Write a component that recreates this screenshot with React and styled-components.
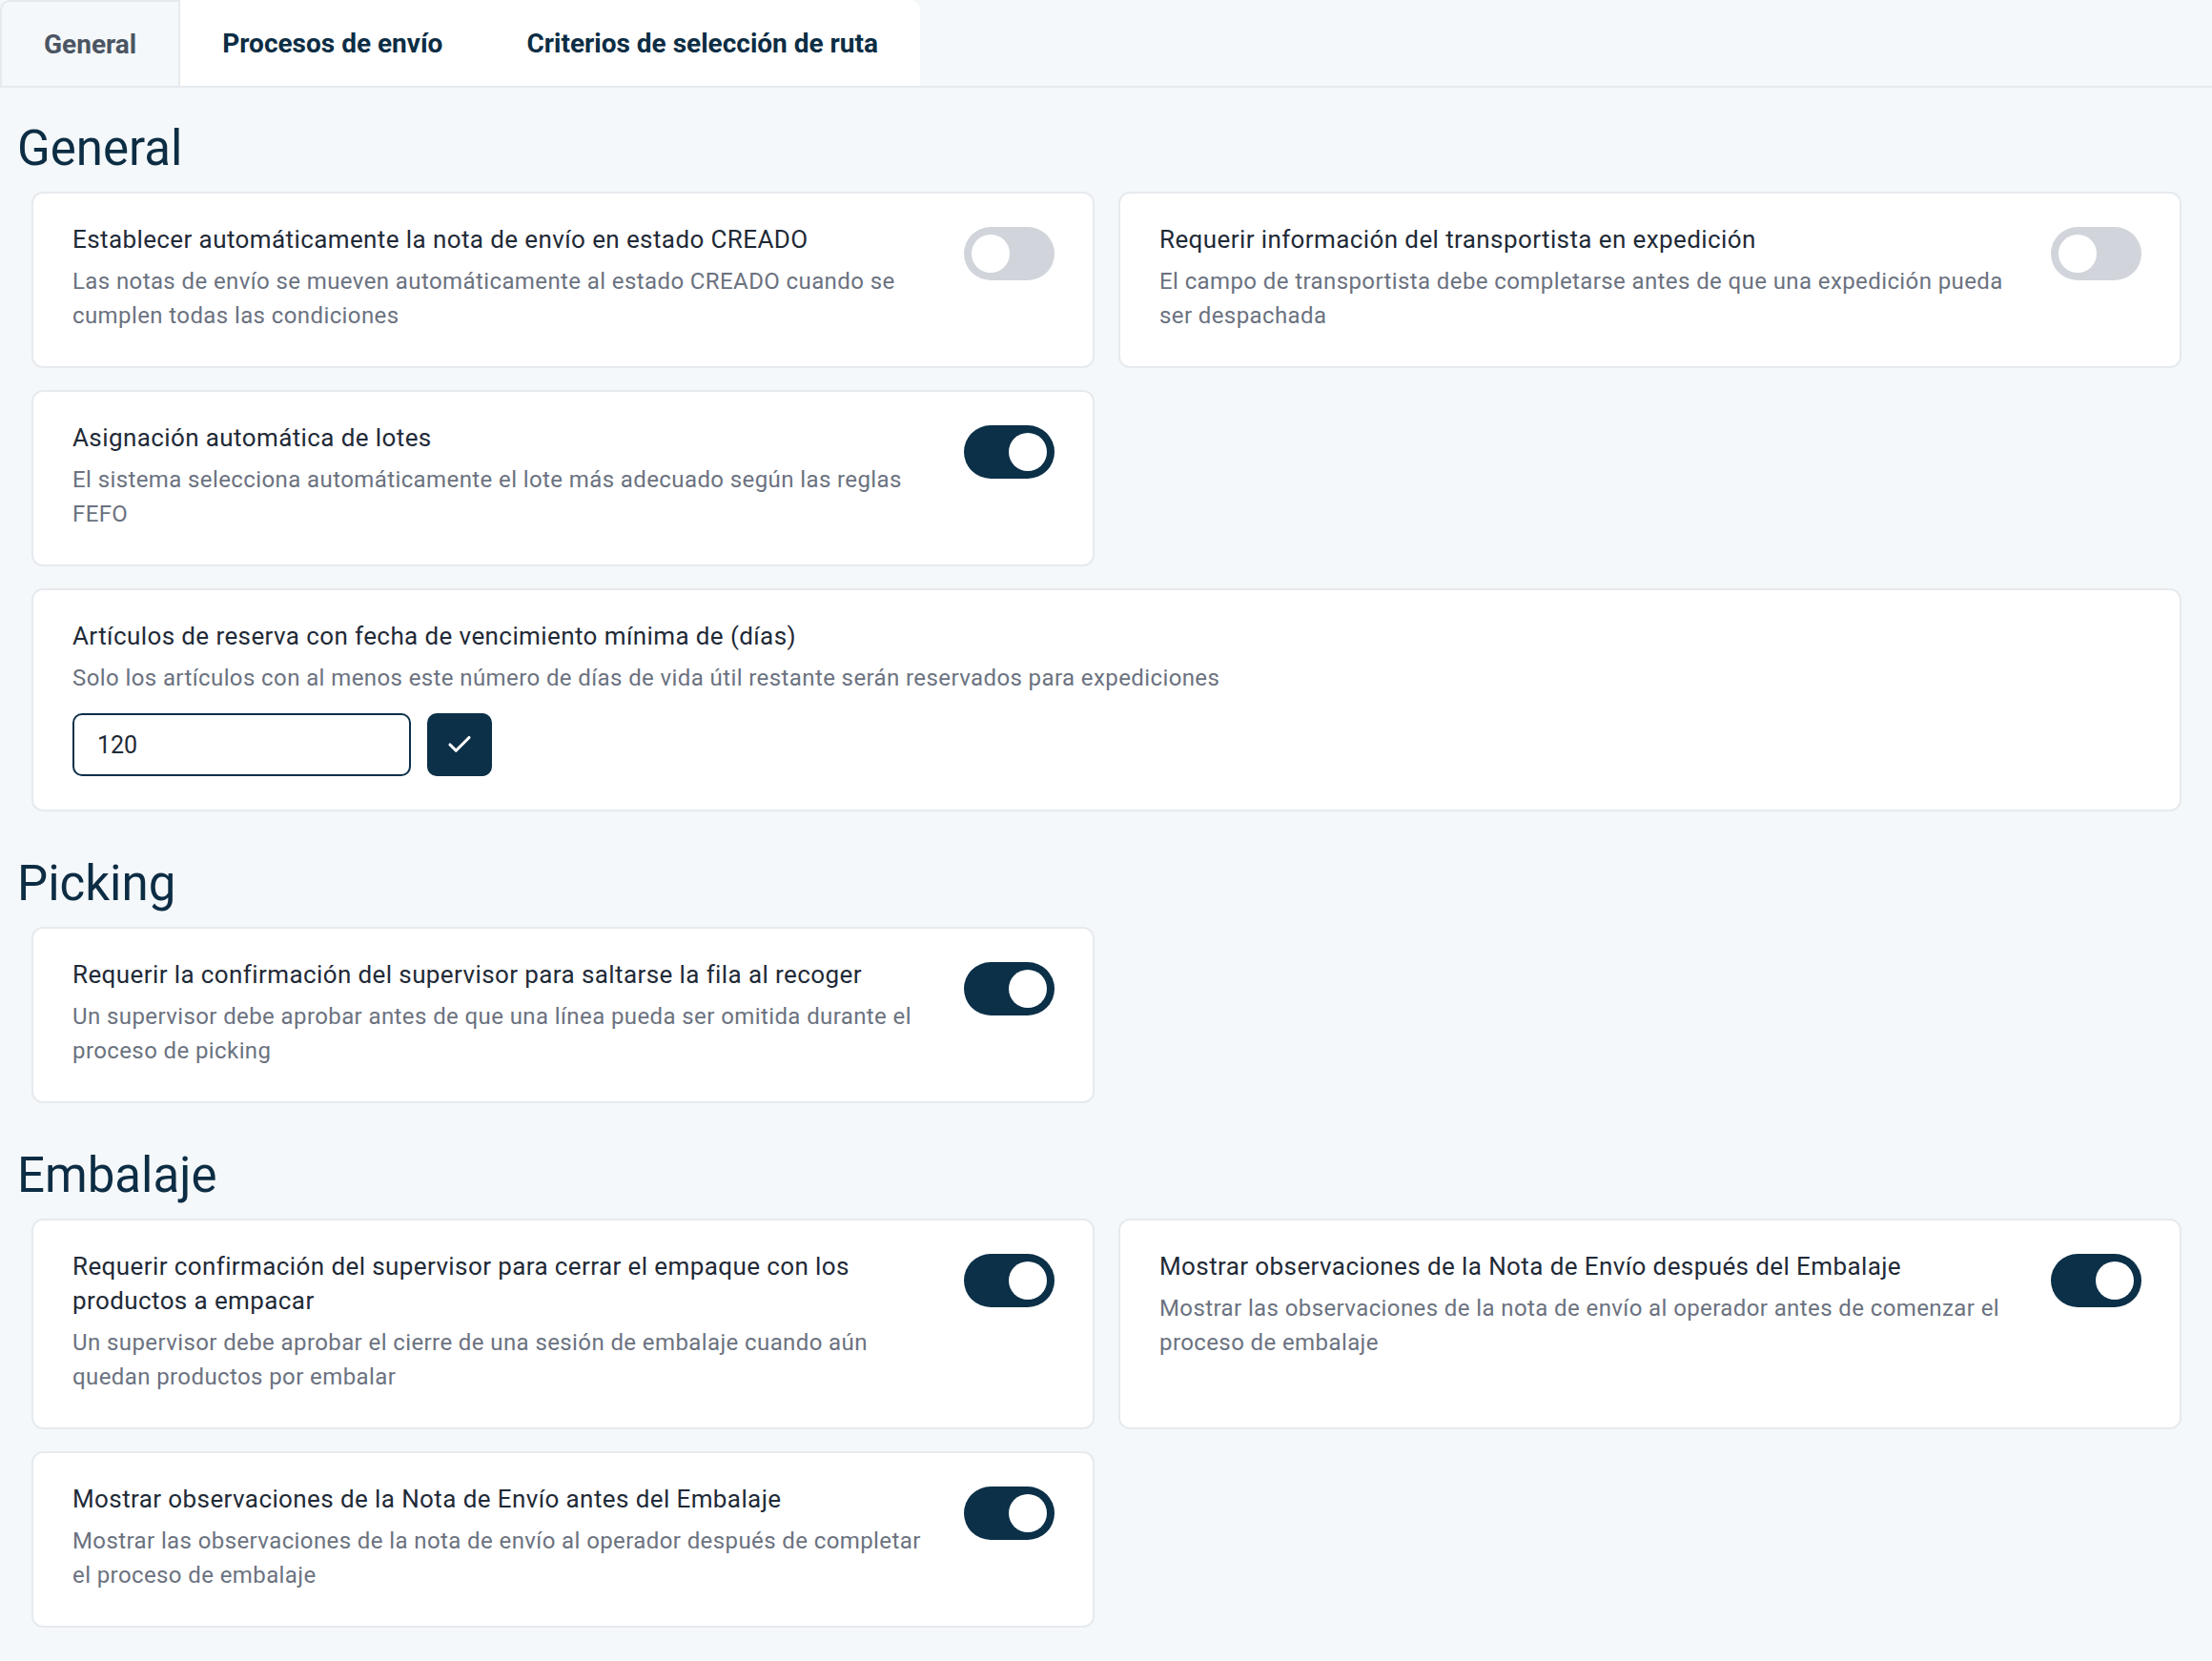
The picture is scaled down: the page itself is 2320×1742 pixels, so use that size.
import React, { useState } from 'react';
import styled, { createGlobalStyle } from 'styled-components';
import { Check } from 'lucide-react';

const colors = {
  page: '#f5f8fa',
  navy: '#0b3048',
  heading: '#0c2d44',
  title: '#1f2a37',
  text: '#6b7280',
  border: '#e6eaee',
  off: '#d1d5db',
};

const GlobalStyle = createGlobalStyle`
  html, body {
    margin: 0;
    padding: 0;
    background: ${colors.page};
    font-family: Roboto, "Noto Sans", sans-serif;
  }
  * { box-sizing: border-box; }
`;

const Page = styled.div`
  min-height: 1742px;
  background: ${colors.page};
  padding-bottom: 30px;
`;

const TabBar = styled.div`
  display: flex;
  height: 92px;
  border-bottom: 2px solid ${colors.border};
`;

const Tab = styled.button`
  height: 92px;
  margin-bottom: -2px;
  padding: 0 44px;
  border: none;
  border-bottom: 2px solid ${colors.border};
  font-family: inherit;
  font-size: 28px;
  font-weight: 700;
  cursor: pointer;
  background: ${(p) => (p.$active ? colors.page : '#fff')};
  color: ${(p) => (p.$active ? '#4b5563' : colors.heading)};
  ${(p) =>
    p.$active &&
    `
    border: 2px solid ${colors.border};
    border-top-left-radius: 10px;
  `}
  &:last-child {
    border-top-right-radius: 10px;
  }
`;

const Content = styled.div`
  padding: 0 32px 0 18px;
`;

const SectionTitle = styled.h2`
  margin: ${(p) => (p.$first ? '35px' : '47px')} 0 16px;
  font-size: 51px;
  line-height: 58px;
  font-weight: 400;
  color: ${colors.heading};
`;

const Grid = styled.div`
  display: grid;
  grid-template-columns: 1fr 1fr;
  column-gap: 25px;
  row-gap: 23px;
  margin-left: 15px;
`;

const Card = styled.div`
  grid-column: ${(p) => (p.$wide ? '1 / -1' : 'auto')};
  display: flex;
  align-items: flex-start;
  gap: 41px;
  padding: 30px 40px 35px 41px;
  background: #fff;
  border: 2px solid ${colors.border};
  border-radius: 12px;
`;

const TextCol = styled.div`
  flex: 1;
  min-width: 0;
`;

const Title = styled.div`
  font-size: 26px;
  line-height: 36px;
  letter-spacing: 0.4px;
  color: ${colors.title};
`;

const Description = styled.div`
  margin-top: 8px;
  font-size: 24px;
  line-height: 36px;
  letter-spacing: 0.4px;
  color: ${colors.text};
`;

const Track = styled.button`
  flex-shrink: 0;
  position: relative;
  width: 95px;
  height: 56px;
  margin-top: 5px;
  padding: 0;
  border: none;
  border-radius: 28px;
  cursor: pointer;
  background: ${(p) => (p.$on ? colors.navy : colors.off)};
`;

const Knob = styled.span`
  position: absolute;
  top: 8px;
  left: ${(p) => (p.$on ? '47px' : '8px')};
  width: 40px;
  height: 40px;
  border-radius: 50%;
  background: #fff;
`;

const InputRow = styled.div`
  display: flex;
  gap: 17px;
  margin-top: 19px;
`;

const NumberInput = styled.input`
  width: 355px;
  height: 66px;
  padding: 0 24px;
  border: 2px solid ${colors.navy};
  border-radius: 10px;
  font-family: inherit;
  font-size: 25px;
  color: ${colors.title};
  outline: none;
`;

const ConfirmButton = styled.button`
  width: 68px;
  height: 66px;
  display: flex;
  align-items: center;
  justify-content: center;
  border: none;
  border-radius: 10px;
  background: ${colors.navy};
  color: #fff;
  cursor: pointer;
`;

const Toggle = ({ initial }) => {
  const [on, setOn] = useState(initial);
  return (
    <Track $on={on} onClick={() => setOn(!on)}>
      <Knob $on={on} />
    </Track>
  );
};

const Setting = ({ title, description, on }) => (
  <Card>
    <TextCol>
      <Title>{title}</Title>
      <Description>{description}</Description>
    </TextCol>
    <Toggle initial={on} />
  </Card>
);

const sections = [
  {
    name: 'General',
    items: [
      {
        title: 'Establecer automáticamente la nota de envío en estado CREADO',
        description:
          'Las notas de envío se mueven automáticamente al estado CREADO cuando se cumplen todas las condiciones',
        on: false,
      },
      {
        title: 'Requerir información del transportista en expedición',
        description:
          'El campo de transportista debe completarse antes de que una expedición pueda ser despachada',
        on: false,
      },
      {
        title: 'Asignación automática de lotes',
        description:
          'El sistema selecciona automáticamente el lote más adecuado según las reglas FEFO',
        on: true,
      },
      { wide: true },
    ],
  },
  {
    name: 'Picking',
    items: [
      {
        title: 'Requerir la confirmación del supervisor para saltarse la fila al recoger',
        description:
          'Un supervisor debe aprobar antes de que una línea pueda ser omitida durante el proceso de picking',
        on: true,
      },
    ],
  },
  {
    name: 'Embalaje',
    items: [
      {
        title: 'Requerir confirmación del supervisor para cerrar el empaque con los productos a empacar',
        description:
          'Un supervisor debe aprobar el cierre de una sesión de embalaje cuando aún quedan productos por embalar',
        on: true,
      },
      {
        title: 'Mostrar observaciones de la Nota de Envío después del Embalaje',
        description:
          'Mostrar las observaciones de la nota de envío al operador antes de comenzar el proceso de embalaje',
        on: true,
      },
      {
        title: 'Mostrar observaciones de la Nota de Envío antes del Embalaje',
        description:
          'Mostrar las observaciones de la nota de envío al operador después de completar el proceso de embalaje',
        on: true,
      },
    ],
  },
];

const ExpiryCard = () => {
  const [days, setDays] = useState('120');
  return (
    <Card $wide>
      <TextCol>
        <Title>Artículos de reserva con fecha de vencimiento mínima de (días)</Title>
        <Description>
          Solo los artículos con al menos este número de días de vida útil restante serán reservados para expediciones
        </Description>
        <InputRow>
          <NumberInput value={days} onChange={(e) => setDays(e.target.value)} />
          <ConfirmButton>
            <Check size={30} strokeWidth={2.5} />
          </ConfirmButton>
        </InputRow>
      </TextCol>
    </Card>
  );
};

export default function App() {
  const [tab, setTab] = useState(0);
  const tabs = ['General', 'Procesos de envío', 'Criterios de selección de ruta'];
  return (
    <Page>
      <GlobalStyle />
      <TabBar>
        {tabs.map((t, i) => (
          <Tab key={t} $active={tab === i} onClick={() => setTab(i)}>
            {t}
          </Tab>
        ))}
      </TabBar>
      <Content>
        {sections.map((s, i) => (
          <section key={s.name}>
            <SectionTitle $first={i === 0}>{s.name}</SectionTitle>
            <Grid>
              {s.items.map((item, j) =>
                item.wide ? <ExpiryCard key={j} /> : <Setting key={j} {...item} />
              )}
            </Grid>
          </section>
        ))}
      </Content>
    </Page>
  );
}
